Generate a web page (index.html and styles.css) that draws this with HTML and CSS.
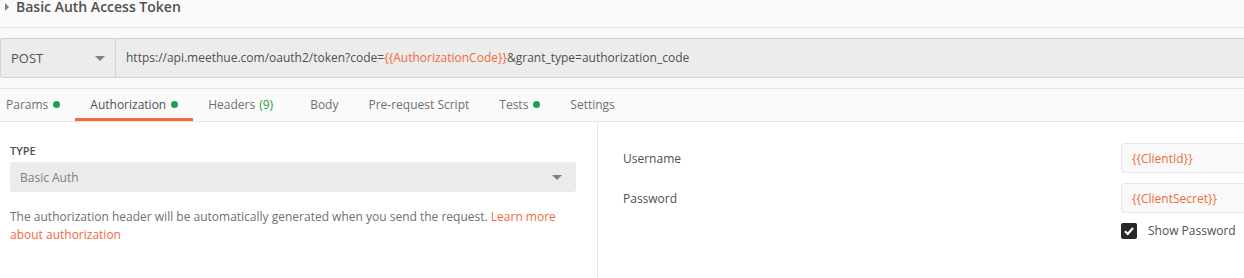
FILE: index.html
```html
<!DOCTYPE html>
<html lang="en">
  <head>
    <meta charset="UTF-8" />
    <title>Basic Auth Access Token</title>
    <link rel="stylesheet" href="styles.css">
  </head>
  <body>
    <div class="title-row">
      <span class="title-caret"></span>
      <span class="title">Basic Auth Access Token</span>
    </div>

    <div class="request-bar">
      <div class="method">
        <span>POST</span>
        <span class="caret"></span>
      </div>
      <div class="url">https://api.meethue.com/oauth2/token?code=<span class="var">{{AuthorizationCode}}</span>&amp;grant_type=authorization_code</div>
    </div>

    <nav class="tabs">
      <div class="tab">Params <span class="dot"></span></div>
      <div class="tab active">Authorization <span class="dot"></span></div>
      <div class="tab">Headers <span class="count">(9)</span></div>
      <div class="tab">Body</div>
      <div class="tab">Pre-request Script</div>
      <div class="tab">Tests <span class="dot"></span></div>
      <div class="tab">Settings</div>
    </nav>

    <main class="auth">
      <section class="auth-left">
        <div class="label">Type</div>
        <div class="select">
          <span>Basic Auth</span>
          <span class="caret"></span>
        </div>
        <p class="help">
          The authorization header will be automatically generated when you send the request.
          <a href="#">Learn more about authorization</a>
        </p>
      </section>

      <section class="auth-right">
        <div class="field-label">Username</div>
        <div class="field"><span class="var">{{ClientId}}</span></div>
        <div class="field-label">Password</div>
        <div class="field"><span class="var">{{ClientSecret}}</span></div>
        <div></div>
        <label class="show-pass">
          <span class="checkbox">
            <svg width="12" height="12" viewBox="0 0 12 12">
              <path d="M2 6.3 L4.8 9 L10 3" fill="none" stroke="#fff" stroke-width="2.2" />
            </svg>
          </span>
          Show Password
        </label>
      </section>
    </main>
  </body>
</html>
```

FILE: styles.css
```css
* {
  box-sizing: border-box;
}

html {
  font-family: "Open Sans", sans-serif;
  font-size: 12px;
  color: #505050;
}

body {
  margin: 0;
  background-color: #fafafa;
  overflow: hidden;
  height: 278px;
}

.var {
  color: #f26b3a;
}

.caret {
  width: 0;
  height: 0;
  border-left: 5px solid transparent;
  border-right: 5px solid transparent;
  border-top: 5px solid #808080;
}

/* Ligne du titre */
.title-row {
  height: 28px;
  display: flex;
  align-items: flex-start;
  border-bottom: 1px solid #e6e6e6;
  padding-left: 5px;
}

.title-caret {
  margin-top: 3px;
  width: 0;
  height: 0;
  border-top: 4px solid transparent;
  border-bottom: 4px solid transparent;
  border-left: 4px solid #808080;
  margin-right: 7px;
}

.title {
  font-size: 14px;
  font-weight: 600;
  line-height: 16px;
  margin-top: -1px;
}

/* Barre de requête */
.request-bar {
  margin-top: 10px;
  height: 40px;
  display: flex;
  background-color: #ececec;
  border: 1px solid #d4d4d4;
  border-right: none;
  border-radius: 3px 0 0 3px;
  overflow: hidden;
}

.method {
  width: 115px;
  flex-shrink: 0;
  display: flex;
  align-items: center;
  justify-content: space-between;
  padding: 0 10px 0 10px;
  border-right: 1px solid #d4d4d4;
  font-size: 13px;
  color: #505050;
}

.url {
  flex: 1;
  line-height: 38px;
  padding-left: 10px;
  white-space: nowrap;
}

/* Onglets */
.tabs {
  margin-top: 10px;
  height: 34px;
  display: flex;
  border-top: 1px solid #e6e6e6;
  border-bottom: 1px solid #e6e6e6;
  margin-left: -9px;
  overflow: hidden;
}

.tab {
  display: flex;
  align-items: center;
  padding: 0 15px;
  height: 32px;
  color: #707070;
  border-bottom: 3px solid transparent;
  padding-top: 2px;
  flex-shrink: 0;
}

.tab.active {
  color: #505050;
  border-bottom-color: #f26b3a;
}

.dot {
  width: 7px;
  height: 7px;
  border-radius: 50%;
  background-color: #1e9f4f;
  margin-left: 5px;
}

.count {
  color: #1e9f4f;
  margin-left: 4px;
  margin-right: 7px;
}

/* Contenu */
.auth {
  display: flex;
  background-color: #fff;
  height: 160px;
}

.auth-left {
  width: 598px;
  flex-shrink: 0;
  padding: 22px 21px 0 10px;
  border-right: 1px solid #e6e6e6;
}

.label {
  text-transform: uppercase;
  font-size: 11px;
  font-weight: 600;
  line-height: 14px;
}

.select {
  margin-top: 4px;
  height: 30px;
  background-color: #ebebeb;
  border-radius: 3px;
  display: flex;
  align-items: center;
  justify-content: space-between;
  padding: 0 14px 0 10px;
  color: #808080;
}

.help {
  margin: 16px 0 0;
  line-height: 18px;
  color: #707070;
}

.help a {
  color: #f26b3a;
  text-decoration: none;
}

.auth-right {
  flex: 1;
  min-width: 0;
  overflow: hidden;
  display: grid;
  grid-template-columns: 498px 300px;
  grid-auto-rows: 30px;
  row-gap: 10px;
  padding: 21px 0 0 25px;
  align-items: center;
}

.field-label {
  color: #505050;
}

.field {
  height: 30px;
  display: flex;
  align-items: center;
  padding-left: 10px;
  background-color: #f9f9f9;
  border: 1px solid #e6e6e6;
  border-radius: 3px;
}

.show-pass {
  display: flex;
  align-items: center;
  align-self: start;
  margin-top: -1px;
  color: #505050;
  white-space: nowrap;
}

.checkbox {
  width: 16px;
  height: 16px;
  background-color: #282828;
  border-radius: 2px;
  display: flex;
  align-items: center;
  justify-content: center;
  margin-right: 11px;
}
```
